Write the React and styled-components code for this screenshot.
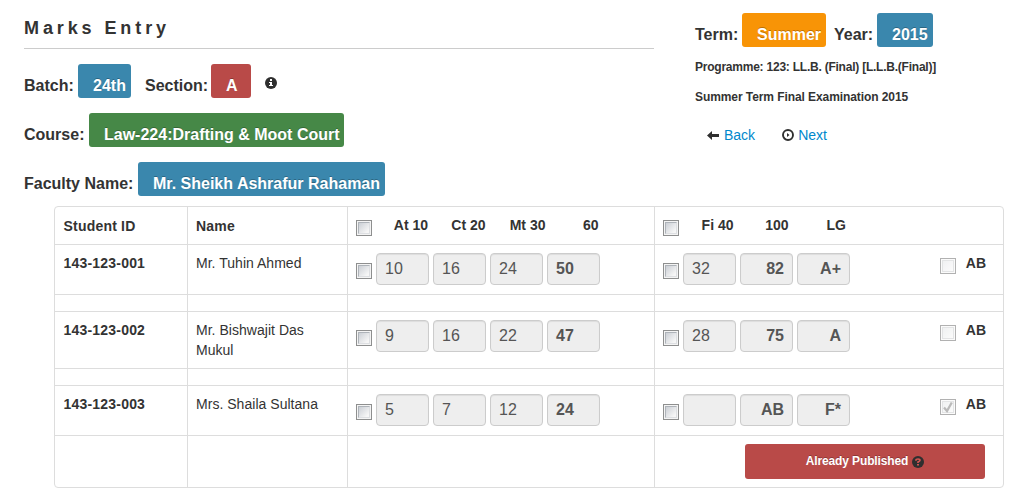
import React from 'react';
import styled, { createGlobalStyle, css } from 'styled-components';

const GlobalStyle = createGlobalStyle`
  *, *::before, *::after { box-sizing: border-box; }
  body {
    margin: 0;
    background: #fff;
    color: #333;
    font: 14px/20px "Liberation Sans", Arial, sans-serif;
    overflow: hidden;
  }
`;

const Page = styled.main`
  width: 1034px;
  height: 500px;
  display: flex;
  flex-direction: column;
`;
const Header = styled.header`
  height: 206px;
  flex: none;
  padding-left: 24px;
  display: flex;
`;
const CourseInfo = styled.section`
  width: 630px;
`;
const TermInfo = styled.section`
  margin-left: 41px;
  padding-top: 13px;
`;
const Title = styled.h1`
  margin: 0 0 15px;
  height: 49px;
  padding-top: 17px;
  border-bottom: 1px solid #ccc;
  font-size: 18px;
  line-height: 22px;
  letter-spacing: 3.9px;
`;
const InfoLine = styled.div`
  display: flex;
  height: 34px;
  margin-bottom: 15px;
  font-size: 16px;
  font-weight: bold;
  white-space: nowrap;
`;
const Label = styled.span`
  width: ${(p) => p.$width}px;
  padding-top: 12px;
  margin-left: ${(p) => p.$gap || 0}px;
`;
const tones = { info: '#3a87ad', danger: '#b94a48', success: '#468847', warning: '#f89406' };
const Badge = styled.span`
  width: ${(p) => p.$width}px;
  height: 34px;
  padding: 12px 0 0 15px;
  border-radius: 3px;
  background: ${(p) => tones[p.$tone]};
  color: #fff;
  text-shadow: 0 -1px 0 rgba(0, 0, 0, 0.25);
`;
const InfoMark = styled.span`
  display: flex;
  margin: 13px 0 0 14px;
`;
const Note = styled.p`
  margin: ${(p) => p.$top}px 0 0;
  font-size: 12px;
  font-weight: bold;
  letter-spacing: ${(p) => p.$tracking}px;
  white-space: nowrap;
`;
const Nav = styled.nav`
  display: flex;
  margin: 18px 0 0 12px;
  gap: 26px;
`;
const NavLink = styled.a`
  display: flex;
  align-items: center;
  gap: ${(p) => p.$gap}px;
  color: #08c;
`;

const Table = styled.section`
  width: 950px;
  margin-left: 54px;
  border: 1px solid #ddd;
  border-radius: 4px;
`;
const Row = styled.div`
  display: grid;
  grid-template-columns: 132px 160px 307px 349px;
  height: ${(p) => p.$height}px;
  & + & { border-top: 1px solid #ddd; }
`;
const Cell = styled.div`
  padding: 8px;
  display: flex;
  align-items: flex-start;
  font-weight: ${(p) => (p.$bold ? 'bold' : 'normal')};
  & + & { border-left: 1px solid #ddd; }
`;
const TextCell = styled(Cell)`
  padding-top: ${(p) => (p.$head ? 9 : 8)}px;
  padding-left: ${(p) => (p.$first ? 8.5 : 8)}px;
  letter-spacing: ${(p) => (p.$bold ? 0.2 : 0.03)}px;
`;
const HeadLabel = styled.span`
  width: ${(p) => p.$width}px;
  text-align: right;
  font-weight: bold;
  white-space: nowrap;
`;
const Check = styled.span`
  flex: none;
  width: 16px;
  height: 16px;
  margin-top: ${(p) => p.$top}px;
  padding: 1px;
  border: 1px solid ${(p) => (p.$disabled ? '#b1b1b1' : '#8e8f8f')};
  background: #f4f4f4;
  display: grid;
  &::before {
    content: '';
    grid-area: 1 / 1;
    width: 12px;
    height: 12px;
    border: 1px solid;
    border-color: #aeb3b9 #dddfe2 #dddfe2 #aeb3b9;
    background: linear-gradient(135deg, #cbcfd5, #f6f6f6 85%);
  }
  ${(p) => p.$disabled && css`
    background: #fbfbfb;
    &::before { border-color: #e3e4e5; background: linear-gradient(135deg, #f0f1f2, #fbfbfb); }
  `}
`;
const Tick = styled.svg`
  grid-area: 1 / 1;
  z-index: 1;
`;
const Mark = styled.span`
  flex: none;
  width: 53px;
  height: 32px;
  margin-left: 4px;
  padding: 5px 8px;
  border: 1px solid #ccc;
  border-radius: 4px;
  background: #eee;
  box-shadow: inset 0 1px 1px rgba(0, 0, 0, 0.075);
  color: #555;
  font-size: 16px;
  font-weight: ${(p) => (p.$bold ? 'bold' : 'normal')};
  text-align: ${(p) => (p.$end ? 'right' : 'left')};
`;
const Absent = styled.label`
  display: flex;
  margin-left: auto;
  padding-right: 9px;
  gap: 10px;
  font-weight: bold;
`;
const Published = styled.button`
  display: flex;
  align-items: center;
  justify-content: center;
  gap: 4px;
  width: 240px;
  height: 35px;
  margin: 0 10px 0 auto;
  padding: 0;
  border: 0;
  border-radius: 3px;
  background: #b94a48;
  color: #fff;
  font: bold 12px "Liberation Sans", Arial, sans-serif;
  letter-spacing: -0.13px;
  text-shadow: 0 -1px 0 rgba(0, 0, 0, 0.25);
  & > span { margin-top: -2px; }
`;

const InfoIcon = () => (
  <svg width="12" height="12" viewBox="0 0 12 12">
    <circle cx="6" cy="6" r="6" fill="#2f2f2f" />
    <path d="M5 2h2v2H5zM4 5h3v3h1v1H4V8h1V6H4z" fill="#fff" />
  </svg>
);
const BackIcon = () => (
  <svg width="12" height="12" viewBox="0 0 12 12">
    <path d="M0 6.5 5 2v3h7v3H5v3z" fill="#2f2f2f" />
  </svg>
);
const NextIcon = () => (
  <svg width="13" height="12" viewBox="0 0 13 12">
    <circle cx="7" cy="6" r="5" fill="none" stroke="#2f2f2f" strokeWidth="1.9" />
    <path d="M6 4 8.5 6 6 8z" fill="#2f2f2f" />
  </svg>
);
const HelpIcon = () => (
  <svg width="12" height="12" viewBox="0 0 12 12">
    <circle cx="6" cy="6" r="6" fill="#2f2f2f" />
    <path d="M4 4.8V4q0-1 2-1t2 1.2Q8 5 6 6v1" fill="none" stroke="#d05552" strokeWidth="1.7" />
    <path d="M5 8h2v1.6H5z" fill="#d05552" />
  </svg>
);

const students = [
  { id: '143-123-001', name: 'Mr. Tuhin Ahmed', marks: ['10', '16', '24', '50'], final: ['32', '82', 'A+'], height: 50 },
  { id: '143-123-002', name: 'Mr. Bishwajit Das Mukul', marks: ['9', '16', '22', '47'], final: ['28', '75', 'A'], height: 57 },
  { id: '143-123-003', name: 'Mrs. Shaila Sultana', marks: ['5', '7', '12', '24'], final: ['', 'AB', 'F*'], height: 50, absent: true },
];

const EmptyCells = ({ count }) => Array.from({ length: count }, (_, i) => <Cell key={i} />);

function StudentRow({ student }) {
  return (
    <Row $height={student.height}>
      <TextCell $bold $first>{student.id}</TextCell>
      <TextCell>{student.name}</TextCell>
      <Cell>
        <Check $top={10} />
        {student.marks.map((m, i) => <Mark key={i} $bold={i === 3}>{m}</Mark>)}
      </Cell>
      <Cell>
        <Check $top={10} />
        {student.final.map((m, i) => <Mark key={i} $bold={i > 0} $end={i > 0}>{m}</Mark>)}
        <Absent>
          <Check $top={5} $disabled>
            {student.absent && (
              <Tick width="12" height="12" viewBox="0 0 12 12">
                <path d="m2 6.5 3 3.5 4.8-8.5" fill="none" stroke="#bababa" strokeWidth="2.3" />
              </Tick>
            )}
          </Check>
          AB
        </Absent>
      </Cell>
    </Row>
  );
}

export default function App() {
  return (
    <Page>
      <GlobalStyle />
      <Header>
        <CourseInfo>
          <Title>Marks Entry</Title>
          <InfoLine>
            <Label $width={54}>Batch:</Label>
            <Badge $tone="info" $width={53}>24th</Badge>
            <Label $width={66} $gap={14}>Section:</Label>
            <Badge $tone="danger" $width={40}>A</Badge>
            <InfoMark><InfoIcon /></InfoMark>
          </InfoLine>
          <InfoLine>
            <Label $width={65}>Course:</Label>
            <Badge $tone="success" $width={255}>Law-224:Drafting &amp; Moot Court</Badge>
          </InfoLine>
          <InfoLine>
            <Label $width={114}>Faculty Name:</Label>
            <Badge $tone="info" $width={247}>Mr. Sheikh Ashrafur Rahaman</Badge>
          </InfoLine>
        </CourseInfo>
        <TermInfo>
          <InfoLine>
            <Label $width={47}>Term:</Label>
            <Badge $tone="warning" $width={84}>Summer</Badge>
            <Label $width={43} $gap={8}>Year:</Label>
            <Badge $tone="info" $width={56}>2015</Badge>
          </InfoLine>
          <Note $top={-5} $tracking={-0.23}>Programme: 123: LL.B. (Final) [L.L.B.(Final)]</Note>
          <Note $top={10} $tracking={-0.08}>Summer Term Final Examination 2015</Note>
          <Nav>
            <NavLink $gap={5}><BackIcon />Back</NavLink>
            <NavLink $gap={4}><NextIcon />Next</NavLink>
          </Nav>
        </TermInfo>
      </Header>
      <Table>
        <Row $height={37}>
          <TextCell $bold $first $head>Student ID</TextCell>
          <TextCell $bold $head>Name</TextCell>
          <Cell>
            <Check $top={5} />
            <HeadLabel $width={56}>At 10</HeadLabel>
            <HeadLabel $width={57.5}>Ct 20</HeadLabel>
            <HeadLabel $width={60}>Mt 30</HeadLabel>
            <HeadLabel $width={53}>60</HeadLabel>
          </Cell>
          <Cell>
            <Check $top={5} />
            <HeadLabel $width={54.5}>Fi 40</HeadLabel>
            <HeadLabel $width={55}>100</HeadLabel>
            <HeadLabel $width={57.5}>LG</HeadLabel>
          </Cell>
        </Row>
        <StudentRow student={students[0]} />
        <Row $height={17}><EmptyCells count={4} /></Row>
        <StudentRow student={students[1]} />
        <Row $height={17}><EmptyCells count={4} /></Row>
        <StudentRow student={students[2]} />
        <Row $height={52}>
          <EmptyCells count={3} />
          <Cell><Published><span>Already Published</span><HelpIcon /></Published></Cell>
        </Row>
      </Table>
    </Page>
  );
}
